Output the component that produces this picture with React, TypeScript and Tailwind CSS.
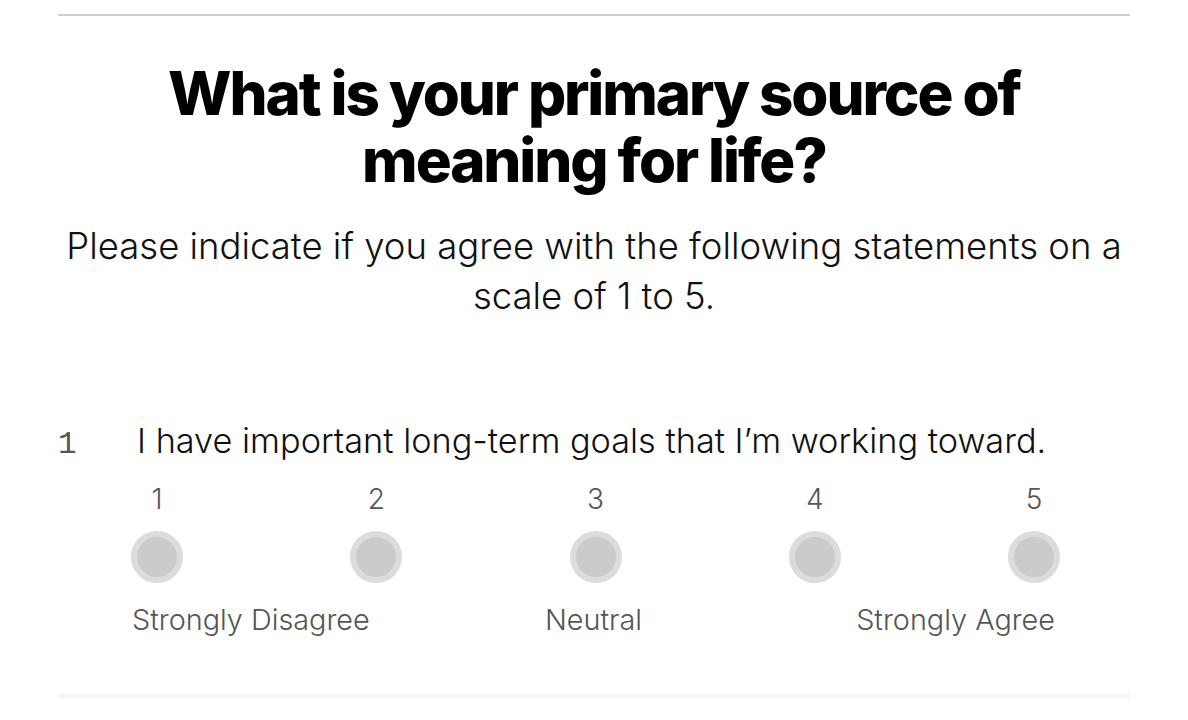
const SCALE = [1, 2, 3, 4, 5];

function ScaleOption({ n }: { n: number }) {
  return (
    <div className="flex w-[52px] flex-col items-center">
      <span className="text-[28px] leading-[32px] font-light text-[#555]">{n}</span>
      <button
        type="button"
        className="mt-[16px] h-[52px] w-[52px] rounded-full border-[6px] border-[#dcdcdc] bg-[#cbcbcb]"
        aria-label={`Option ${n}`}
      />
    </div>
  );
}

export default function App() {
  return (
    <div className="min-h-screen bg-white font-['Inter',sans-serif] text-black">
      <div className="mx-auto w-[1072px] pt-[14px]">
        <div className="h-[2px] bg-[#cfcfcf]" />

        {/* Heading */}
        <h1 className="mt-[44px] text-center text-[60px] leading-[67px] font-extrabold tracking-[-0.035em]">
          What is your primary source of
          <br />
          meaning for life?
        </h1>
        <p className="mt-[27px] text-center text-[36.5px] leading-[50px] font-light text-[#111]">
          Please indicate if you agree with the following statements on a
          <br />
          scale of 1 to 5.
        </p>

        {/* Question */}
        <div className="mt-[100px] flex items-baseline">
          <span className="w-[79px] font-['Liberation_Mono',monospace] text-[31px] text-[#555]">1</span>
          <span className="text-[34.3px] leading-[40px] font-light text-[#111]">
            I have important long-term goals that I’m working toward.
          </span>
        </div>

        <div className="ml-[73px] mt-[14px] w-[929px]">
          <div className="flex justify-between">
            {SCALE.map((n) => (
              <ScaleOption key={n} n={n} />
            ))}
          </div>
          <div className="mt-[19px] grid grid-cols-3 pl-[1px] pr-[5px] text-[28.8px] leading-[36px] font-light text-[#555]">
            <span className="whitespace-nowrap">Strongly Disagree</span>
            <span className="text-center">Neutral</span>
            <span className="whitespace-nowrap text-right">Strongly Agree</span>
          </div>
        </div>

        <div className="mt-[56px] h-[4px] bg-[#f6f6f4]" />
      </div>
    </div>
  );
}
